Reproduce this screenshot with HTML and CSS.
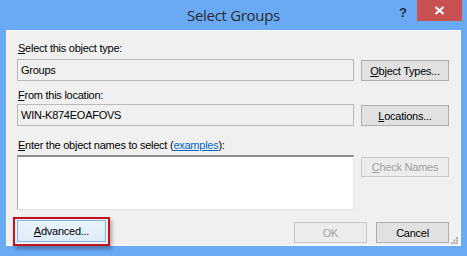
FILE: index.html
```html
<!DOCTYPE html>
<html lang="en">
<head>
    <meta charset="UTF-8">
    <title>Select Groups</title>
    <link rel="stylesheet" href="styles.css">
</head>
<body>

<div class="window">
    <!-- Title bar -->
    <div class="titlebar">
        <span></span>
        <span class="title">Select Groups</span>
        <div class="controls">
            <span class="help">?</span>
            <span class="close">
                <svg width="11" height="9" viewBox="0 0 11 9">
                    <path d="M1.5 1 L9.5 8 M9.5 1 L1.5 8" stroke="#fff" stroke-width="2.2" fill="none"/>
                </svg>
            </span>
        </div>
    </div>

    <!-- Dialog body -->
    <div class="client">
        <div class="label label-first"><u>S</u>elect this object type:</div>
        <div class="row">
            <div class="field">Groups</div>
            <button class="btn"><u>O</u>bject Types...</button>
        </div>

        <div class="label label-second"><u>F</u>rom this location:</div>
        <div class="row">
            <div class="field">WIN-K874EOAFOVS</div>
            <button class="btn"><u>L</u>ocations...</button>
        </div>

        <div class="label label-third"><u>E</u>nter the object names to select (<a href="#">examples</a>):</div>
        <div class="row row-top">
            <div class="names"></div>
            <button class="btn btn-disabled btn-check"><u>C</u>heck Names</button>
        </div>

        <div class="footer">
            <div class="highlight">
                <button class="btn btn-focus"><u>A</u>dvanced...</button>
            </div>
            <div class="footer-right">
                <button class="btn btn-disabled btn-small">OK</button>
                <button class="btn btn-small">Cancel</button>
            </div>
        </div>

        <div class="grip">
            <svg width="7" height="7" viewBox="0 0 7 7" fill="#b4b4b4">
                <rect x="5" y="0" width="2" height="2"/>
                <rect x="2.5" y="2.5" width="2" height="2"/>
                <rect x="5" y="2.5" width="2" height="2"/>
                <rect x="0" y="5" width="2" height="2"/>
                <rect x="2.5" y="5" width="2" height="2"/>
                <rect x="5" y="5" width="2" height="2"/>
            </svg>
        </div>
    </div>
</div>

</body>
</html>
```

FILE: styles.css
```css
body {
    margin: 0;
    padding: 0;
    background-color: #6aa9f4;
}

.window {
    width: 467px;
    height: 256px;
    background-color: #6aa9f4;
    overflow: hidden;
}

.titlebar {
    height: 30px;
    display: grid;
    grid-template-columns: 1fr auto 1fr;
}

.title {
    font-family: 'Open Sans', sans-serif;
    font-size: 15px;
    line-height: 20px;
    padding-top: 5px;
    color: #2b2b2b;
    letter-spacing: -0.3px;
}

.controls {
    justify-self: end;
    display: flex;
    align-items: flex-start;
    margin-right: 5px;
}

.help {
    font-family: 'Liberation Sans', sans-serif;
    font-weight: bold;
    font-size: 13px;
    line-height: 13px;
    margin-top: 6px;
    margin-right: 10px;
    color: #1f2b3a;
}

.close {
    width: 45px;
    height: 21px;
    background-color: #c75050;
    display: flex;
    align-items: center;
    justify-content: center;
}

.client {
    position: relative;
    margin-left: 6px;
    padding: 0 11px 0 10px;
    box-sizing: border-box;
    width: 455px;
    height: 216px;
    background-color: #f0f0f0;
    border: 1px solid #fbfbfb;
    font-family: 'Liberation Sans', sans-serif;
    font-size: 11px;
    letter-spacing: -0.25px;
    color: #000;
}

.label {
    line-height: 13px;
    padding-left: 1px;
}

.label-first {
    margin-top: 11px;
    margin-bottom: 4px;
}

.label-second {
    margin-top: 8px;
    margin-bottom: 2px;
}

.label-third {
    margin-top: 13px;
    margin-bottom: 3px;
}

.label a {
    color: #0066cc;
}

.row {
    display: flex;
    align-items: flex-end;
    gap: 7px;
}

.row-top {
    align-items: flex-start;
}

.field {
    width: 337px;
    height: 22px;
    box-sizing: border-box;
    border: 1px solid #b9b9b9;
    background-color: #f0f0f0;
    padding-left: 3px;
    line-height: 20px;
}

.names {
    width: 337px;
    height: 55px;
    box-sizing: border-box;
    background-color: #fff;
    border-top: 2px solid #8c8c8c;
    border-left: 1px solid #a9a9a9;
    border-right: 1px solid #e3e3e3;
    border-bottom: 1px solid #e3e3e3;
}

.btn {
    width: 88px;
    height: 21px;
    box-sizing: border-box;
    border: 1px solid #adadad;
    background-color: #e1e1e1;
    font-family: 'Liberation Sans', sans-serif;
    font-size: 11px;
    letter-spacing: -0.25px;
    color: #000;
    padding: 0;
}

.btn-check {
    margin-top: 2px;
    height: 20px;
}

.btn-disabled {
    color: #a0a0a0;
    background-color: #ececec;
    border-color: #c8c8c8;
}

.btn-small {
    width: 73px;
}

.footer {
    display: flex;
    justify-content: space-between;
    align-items: flex-end;
    margin-top: 7px;
}

.footer-right {
    display: flex;
    gap: 9px;
    margin-bottom: 3px;
}

.highlight {
    margin-left: -4px;
    padding: 1px 2px 2px 2px;
    border: 2px solid #c0121f;
    box-shadow: 2px 3px 4px rgba(0, 0, 0, 0.3);
}

.btn-focus {
    width: 89px;
    height: 22px;
    background: linear-gradient(#ecf4fc, #dcecfc);
    border-color: #7eb4ea;
}

.grip {
    position: absolute;
    right: 2px;
    bottom: 1px;
    line-height: 0;
}
```
